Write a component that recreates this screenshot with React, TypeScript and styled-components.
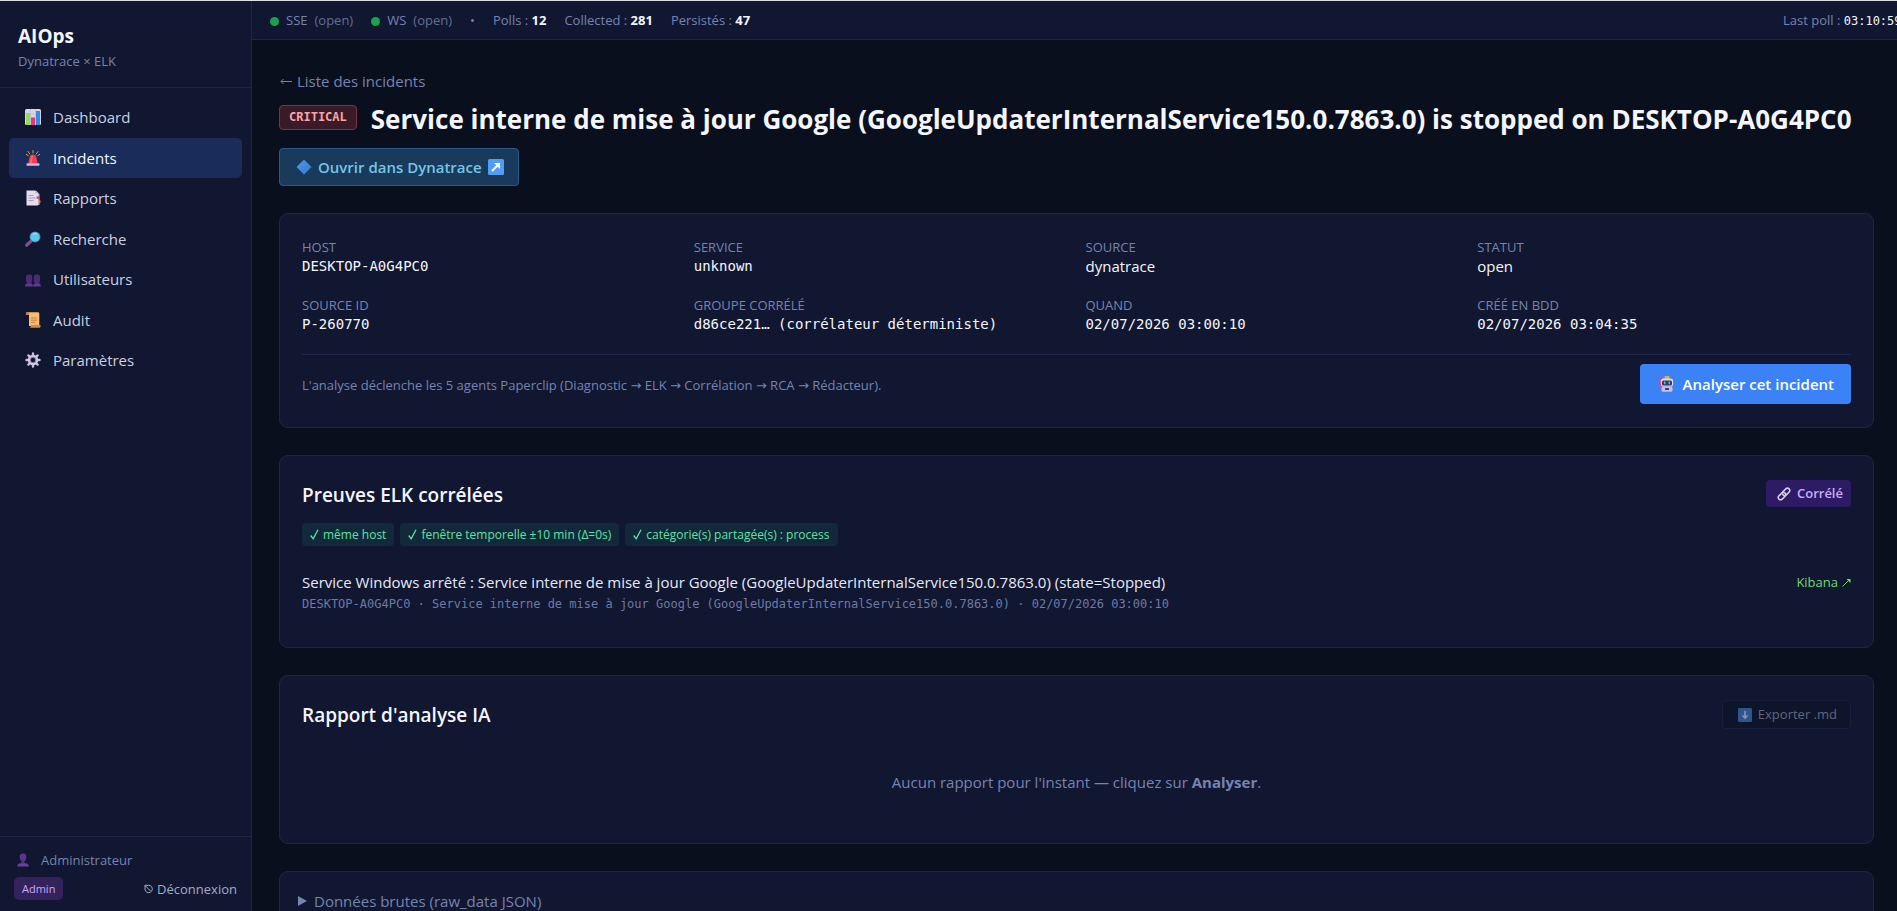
import React from 'react';
import styled, { createGlobalStyle, css } from 'styled-components';

const color = {
  page: '#0a0f1d',
  panel: '#111631',
  line: '#20264a',
  text: '#e6eaf5',
  strong: '#f4f6fc',
  soft: '#c9d0e2',
  muted: '#7684b1',
  accent: '#3b82f6',
  active: '#1a2c5a',
};
const sans = '"Open Sans", "Noto Sans", "DejaVu Sans", sans-serif';
const mono = '"DejaVu Sans Mono", monospace';

const GlobalStyle = createGlobalStyle`
  *, *::before, *::after { box-sizing: border-box; }
  body {
    margin: 0;
    background: ${color.page};
    color: ${color.text};
    font: 400 15px/1.5 ${sans};
  }
  h1, h2, p, dl, dd, ul { margin: 0; padding: 0; }
  ul { list-style: none; }
  a { color: inherit; text-decoration: none; }
  button { font: inherit; cursor: pointer; }
  svg { display: block; flex: none; }
`;

const Shell = styled.div`
  display: grid;
  grid-template-columns: 252px minmax(0, 1fr);
  height: 100vh;
  border-top: 1px solid #dcdfe6;
`;

const Sidebar = styled.aside`
  display: flex;
  flex-direction: column;
  background: ${color.panel};
  border-right: 1px solid ${color.line};
`;

const Brand = styled.div`
  padding: 22px 18px 15px;
  border-bottom: 1px solid ${color.line};
`;
const BrandName = styled.div`
  font-size: 19px;
  font-weight: 700;
  line-height: 27px;
  color: ${color.strong};
`;
const BrandSub = styled.div`
  font-size: 13px;
  line-height: 22px;
  color: ${color.muted};
`;

const Nav = styled.nav`
  flex: 1;
  padding: 9px;
`;
const NavLink = styled.a<{ $active?: boolean }>`
  display: flex;
  align-items: center;
  gap: 12px;
  padding: 9px 16px;
  border-radius: 5px;
  color: ${(p) => (p.$active ? color.strong : color.soft)};
  background: ${(p) => (p.$active ? color.active : 'transparent')};
`;

const UserPanel = styled.div`
  display: flex;
  flex-direction: column;
  gap: 7px;
  padding: 13px 14px 11px;
  border-top: 1px solid ${color.line};
  font-size: 13px;
`;
const UserName = styled.div`
  display: flex;
  align-items: center;
  gap: 11px;
  padding-left: 2px;
  line-height: 20px;
  color: ${color.muted};
`;
const UserActions = styled.div`
  display: flex;
  align-items: center;
  justify-content: space-between;
`;
const RoleBadge = styled.span`
  padding: 0 8px;
  border-radius: 5px;
  background: #33225c;
  color: #cda6fb;
  font-size: 11px;
  line-height: 23px;
`;
const Logout = styled.button`
  display: flex;
  align-items: center;
  gap: 4px;
  padding: 0;
  border: 0;
  background: none;
  color: #a3adc6;
  line-height: 20px;
`;

const Main = styled.div`
  display: flex;
  flex-direction: column;
  min-height: 0;
`;

const TopBar = styled.header`
  display: flex;
  align-items: center;
  gap: 18px;
  flex: none;
  height: 39px;
  padding: 2px 0 0 18px;
  background: ${color.panel};
  border-bottom: 1px solid ${color.line};
  color: ${color.muted};
  font-size: 13px;
  white-space: nowrap;
  overflow: hidden;
  b { color: ${color.strong}; }
`;
const Status = styled.span`
  display: flex;
  align-items: center;
  gap: 7px;
  &::before {
    content: '';
    width: 9px;
    height: 9px;
    border-radius: 50%;
    background: #18a34a;
  }
`;
const Dim = styled.span`
  color: #626f92;
`;
const LastPoll = styled.span`
  flex: 0 0 114px;
  margin-left: auto;
  overflow: hidden;
`;
const PollTime = styled.time`
  font: 400 12px ${mono};
  color: ${color.strong};
`;

const Content = styled.main`
  flex: 1;
  min-height: 0;
  overflow-y: auto;
  scrollbar-width: none;
  padding: 28px 23px 27px 27px;
`;

const BackLink = styled.a`
  display: inline-flex;
  align-items: center;
  gap: 5px;
  line-height: 22px;
  color: ${color.muted};
`;
const TitleRow = styled.div`
  display: flex;
  align-items: center;
  gap: 14px;
  margin-top: 9px;
`;
const Severity = styled.span`
  flex: none;
  margin-bottom: 4px;
  padding: 0 9px;
  border: 1px solid #84303a;
  border-radius: 4px;
  background: #391b28;
  color: #f9a5a5;
  font: 700 12px/23px ${mono};
`;
const Title = styled.h1`
  font-size: 26px;
  font-weight: 700;
  line-height: 36px;
  color: ${color.strong};
`;
const DynatraceLink = styled.a`
  display: inline-flex;
  align-items: center;
  gap: 6px;
  height: 38px;
  margin-top: 11px;
  padding: 0 14px 0 16px;
  border: 1px solid #295a8c;
  border-radius: 4px;
  background: #1a3a5c;
  color: #74c5e6;
  font-weight: 600;
`;

const Card = styled.section<{ $compact?: boolean }>`
  margin-top: 27px;
  padding: ${(p) => (p.$compact ? '18px' : '24px 22px 23px')};
  background: ${color.panel};
  border: 1px solid ${color.line};
  border-radius: 9px;
`;

const Facts = styled.dl`
  display: grid;
  grid-template-columns: repeat(4, minmax(0, 1fr));
  gap: 18px;
  padding-bottom: 18px;
  border-bottom: 1px solid ${color.line};
`;
const FactLabel = styled.dt`
  font-size: 13px;
  line-height: 18px;
  text-transform: uppercase;
  color: ${color.muted};
`;
const FactValue = styled.dd<{ $mono?: boolean }>`
  padding-bottom: 2px;
  line-height: 20px;
  color: ${color.strong};
  ${(p) => p.$mono && css`
    font-family: ${mono};
    font-size: 14px;
  `}
`;
const ActionRow = styled.div`
  display: flex;
  align-items: center;
  justify-content: space-between;
  padding-top: 9px;
`;
const Hint = styled.p`
  padding-top: 3px;
  font-size: 13px;
  color: ${color.muted};
`;
const AnalyzeButton = styled.button`
  display: flex;
  align-items: center;
  gap: 8px;
  height: 40px;
  padding: 0 17px 0 19px;
  border: 0;
  border-radius: 4px;
  background: ${color.accent};
  color: #fff;
  font-weight: 600;
`;

const CardHeader = styled.div`
  display: flex;
  align-items: flex-start;
  justify-content: space-between;
`;
const CardTitle = styled.h2`
  padding-top: 2px;
  font-size: 19px;
  font-weight: 600;
  line-height: 27px;
  color: ${color.strong};
`;
const LinkedBadge = styled.span`
  display: flex;
  align-items: center;
  gap: 6px;
  padding: 0 8px 0 11px;
  border-radius: 4px;
  background: #2e1b66;
  color: #c5affb;
  font-size: 13px;
  font-weight: 600;
  line-height: 27px;
`;
const Chips = styled.ul`
  display: flex;
  flex-wrap: wrap;
  gap: 6px;
  margin-top: 14px;
`;
const Chip = styled.li`
  display: flex;
  align-items: center;
  gap: 4px;
  padding: 0 8px;
  border-radius: 4px;
  background: #11293a;
  color: #5fe3a4;
  font-size: 12px;
  line-height: 23px;
`;
const Evidence = styled.div`
  display: flex;
  align-items: flex-start;
  justify-content: space-between;
  margin-top: 15px;
  padding: 10px 0 9px;
`;
const EvidenceTitle = styled.p`
  line-height: 22px;
  color: ${color.text};
`;
const EvidenceMeta = styled.p`
  font: 400 12px/22px ${mono};
  color: #6d7aa6;
`;
const KibanaLink = styled.a`
  display: flex;
  align-items: center;
  gap: 4px;
  font-size: 13px;
  line-height: 22px;
  color: #6fdb6f;
`;

const ExportButton = styled.button`
  display: flex;
  align-items: center;
  gap: 6px;
  height: 29px;
  padding: 0 13px 0 15px;
  border: 1px solid #181f3b;
  border-radius: 4px;
  background: #0e142a;
  color: #62667c;
  font-size: 13px;
  cursor: not-allowed;
`;
const Empty = styled.p`
  margin-top: 15px;
  padding: 27px 0;
  line-height: 22px;
  text-align: center;
  color: ${color.muted};
`;
const RawSummary = styled.summary`
  display: flex;
  align-items: center;
  gap: 7px;
  line-height: 22px;
  color: ${color.muted};
  cursor: pointer;
`;
const RawJson = styled.pre`
  margin: 12px 0 0;
  font: 400 12px/20px ${mono};
`;

const Svg = ({ size = 16, children }: { size?: number; children: React.ReactNode }) => (
  <svg width={size} height={size} viewBox="0 0 16 16" aria-hidden="true">{children}</svg>
);

const ChartIcon = () => (
  <Svg>
    <rect width="16" height="16" rx="1.5" fill="#dcd5e4" />
    <path d="M0 5h16M0 10h16M5.500 0v16M10.500 0v16" stroke="#bdb4cb" strokeWidth=".6" />
    <rect x="1" y="4" width="4" height="12" fill="#8fdc5c" />
    <rect x="6" y="8.500" width="4" height="7.500" fill="#e8356f" />
    <rect x="11" y="2" width="4" height="14" fill="#2f8de4" />
  </Svg>
);
const SirenIcon = () => (
  <Svg>
    <path d="M8 .5v2.500M3 1.500l1.800 2.500M13 1.500l-1.800 2.500M1.300 4.500l1.900 1M14.700 4.500l-1.900 1" stroke="#d9a441" strokeWidth="1" strokeLinecap="round" />
    <path d="M4.500 7.500C4.800 5.600 6 4.600 8 4.600s3.200 1 3.500 2.900l1.300 6H3.200z" fill="#f43a50" />
    <path d="M6 7c.4-1 1-1.300 2-1.300L7 13H4.800z" fill="#ff6a60" />
    <rect x="1.500" y="13.200" width="13" height="2.500" rx=".8" fill="#c9bce4" />
  </Svg>
);
const ReportIcon = () => (
  <Svg>
    <path d="M3 1h8.500l3 3v11H3z" fill="#b9adc8" />
    <path d="M1.500.5h8.800L13 3.300V15.500H1.500z" fill="#e5dced" />
    <path d="M10.300.5V3.300H13z" fill="#b9adc8" />
    <path d="M3.500 5.500h5M3.500 8h7M3.500 10.500h5" stroke="#a294b4" strokeWidth=".9" />
    <rect x="11.500" y="6.500" width="2.500" height="2.200" fill="#dc3b77" />
    <rect x="13.500" y="10.500" width="2" height="2.200" fill="#d2a136" />
  </Svg>
);
const SearchIcon = () => (
  <Svg>
    <path d="M1.800 14.200l4.400-4.400" stroke="#8a4f8d" strokeWidth="3.200" strokeLinecap="round" />
    <circle cx="10" cy="5.900" r="5.500" fill="#4e6fa8" />
    <circle cx="10" cy="5.900" r="4.700" fill="#59cbea" />
    <path d="M8 3.500c1-.9 2.500-1 3.500-.6" stroke="#b8effb" strokeWidth="1" fill="none" strokeLinecap="round" />
  </Svg>
);
const UsersIcon = () => (
  <Svg>
    <path d="M0 15.500c0-2.500 1.300-3.500 4-3.500s4 1 4 3.500zM8 15.500c0-2.500 1.300-3.500 4-3.500s4 1 4 3.500z" fill="#5f3896" />
    <rect x="1" y="3.500" width="6.200" height="8.500" rx="2.600" fill="#4b2b78" />
    <rect x="8.800" y="3.500" width="6.200" height="8.500" rx="2.600" fill="#4b2b78" />
  </Svg>
);
const ScrollIcon = () => (
  <Svg>
    <path d="M1 1.500C1 .7 1.600.2 2.500.2H13c.9 0 1.300.6 1.300 1.500V14H4V3H1z" fill="#f7bd6c" />
    <path d="M1 1.500C1 .7 1.600.2 2.400.2S4 .7 4 1.500V3H1z" fill="#c57f3e" />
    <path d="M6 13h9.500v1.200c0 .9-.6 1.600-1.500 1.600H4.500C5.500 15.500 6 14.500 6 13z" fill="#d68b4e" />
    <path d="M6 6h6M6 8.200h6M6 10.400h4" stroke="#c77c3c" strokeWidth=".9" />
  </Svg>
);
const GearIcon = () => (
  <Svg>
    <path d="M8 1.500v13M1.500 8h13M3.400 3.400l9.200 9.200M12.600 3.400L3.400 12.600" stroke="#c9bedb" strokeWidth="2.400" strokeLinecap="round" />
    <circle cx="8" cy="8" r="5.200" fill="#d5cbe3" />
    <circle cx="8" cy="8" r="3.200" fill="#9586ad" />
    <circle cx="8" cy="8" r="2.200" fill="#111631" />
  </Svg>
);
const UserIcon = () => (
  <Svg size={14}>
    <path d="M1.500 15.500c0-3 2-4.200 6.500-4.200s6.500 1.200 6.500 4.200z" fill="#6a3fa4" />
    <rect x="4.300" y=".5" width="7.400" height="8.500" rx="3.700" fill="#5b3490" />
    <rect x="6.300" y="7" width="3.400" height="5.500" fill="#553184" />
  </Svg>
);
const LogoutIcon = () => (
  <svg width="9" height="10" viewBox="0 0 9 10" fill="none" stroke="#a3adc6" aria-hidden="true">
    <path d="M3 1.600A3.700 3.700 0 1 1 1.100 3.800M1 1.500l5.500 5.500M1 3.800V1.300h2.500" />
  </svg>
);
const DiamondIcon = () => (
  <Svg>
    <defs>
      <linearGradient id="diamond" x1="0" y1="0" x2="1" y2="1">
        <stop offset="0" stopColor="#4b98ea" />
        <stop offset="1" stopColor="#3a78d2" />
      </linearGradient>
    </defs>
    <path d="M8 .5L15.500 8 8 15.500.5 8z" fill="url(#diamond)" />
  </Svg>
);
const OpenIcon = () => (
  <Svg>
    <rect width="16" height="16" rx="1.500" fill="#4f9df5" />
    <path d="M4 12l6-6" stroke="#fff" strokeWidth="2" />
    <path d="M6 4h6v6z" fill="#fff" />
  </Svg>
);
const RobotIcon = () => (
  <Svg>
    <rect x="5.500" y="0" width="5" height="3" rx="1" fill="#e9ad3a" />
    <path d="M1.500 2v9M14.500 2v9" stroke="#e23d6d" strokeWidth="1" />
    <rect x="1.800" y="2.500" width="12.400" height="8" rx="2.500" fill="#e3daed" />
    <rect x="3" y="4.500" width="10" height="5" rx="1.500" fill="#34365c" />
    <path d="M5.700 5.500v2.800M10.300 5.500v2.800" stroke="#46c2ef" strokeWidth="1.600" />
    <rect x="2.500" y="10.500" width="11" height="5.300" rx="1.500" fill="#cabedb" />
    <rect x="6" y="12" width="4" height="2" rx=".5" fill="#41415f" />
  </Svg>
);
const ChainIcon = () => (
  <svg width="14" height="14" viewBox="0 0 14 14" fill="none" stroke="#d8cce0" strokeWidth="1.500" aria-hidden="true">
    <rect x="4.800" y="2.600" width="8.500" height="4.600" rx="2.300" transform="rotate(-45 9.050 4.900)" />
    <rect x=".7" y="6.800" width="8.500" height="4.600" rx="2.300" transform="rotate(-45 4.950 9.100)" />
  </svg>
);
const DownloadIcon = () => (
  <Svg size={14}>
    <rect width="16" height="16" rx="1.500" fill="#2c558f" />
    <path d="M8 3v6" stroke="#8590ab" strokeWidth="2" />
    <path d="M4 8.500h8L8 13z" fill="#8590ab" />
  </Svg>
);
const CheckIcon = () => (
  <svg width="9" height="11" viewBox="0 0 9 11" fill="none" stroke="currentColor" strokeWidth="1.300" aria-hidden="true">
    <path d="M.7 6.500l2.500 3.300L8 .8" />
  </svg>
);
const BackArrow = () => (
  <svg width="13" height="8" viewBox="0 0 13 8" fill="none" stroke="currentColor" aria-hidden="true">
    <path d="M13 4.500H2M4.500 2L2 4.500 4.500 7" />
  </svg>
);
const NorthEast = () => (
  <svg width="9" height="9" viewBox="0 0 9 9" fill="none" stroke="currentColor" aria-hidden="true">
    <path d="M.5 8.500L7 2" />
    <path d="M4.500 1h4v4z" fill="currentColor" stroke="none" />
  </svg>
);
const Triangle = () => (
  <svg width="9" height="10" viewBox="0 0 9 10" fill="currentColor" aria-hidden="true">
    <path d="M0 0l9 5-9 5z" />
  </svg>
);

const navItems = [
  { label: 'Dashboard', Icon: ChartIcon },
  { label: 'Incidents', Icon: SirenIcon, active: true },
  { label: 'Rapports', Icon: ReportIcon },
  { label: 'Recherche', Icon: SearchIcon },
  { label: 'Utilisateurs', Icon: UsersIcon },
  { label: 'Audit', Icon: ScrollIcon },
  { label: 'Paramètres', Icon: GearIcon },
];

const facts = [
  { label: 'Host', value: 'DESKTOP-A0G4PC0', mono: true },
  { label: 'Service', value: 'unknown', mono: true },
  { label: 'Source', value: 'dynatrace' },
  { label: 'Statut', value: 'open' },
  { label: 'Source ID', value: 'P-260770', mono: true },
  { label: 'Groupe corrélé', value: 'd86ce221… (corrélateur déterministe)', mono: true },
  { label: 'Quand', value: '02/07/2026 03:00:10', mono: true },
  { label: 'Créé en BDD', value: '02/07/2026 03:04:35', mono: true },
];

const reasons = ['même host', 'fenêtre temporelle ±10 min (Δ=0s)', 'catégorie(s) partagée(s) : process'];

export default function App() {
  return (
    <>
      <GlobalStyle />
      <Shell>
        <Sidebar>
          <Brand>
            <BrandName>AIOps</BrandName>
            <BrandSub>Dynatrace × ELK</BrandSub>
          </Brand>
          <Nav>
            {navItems.map(({ label, Icon, active }) => (
              <NavLink key={label} href="#" $active={active} aria-current={active ? 'page' : undefined}>
                <Icon />
                {label}
              </NavLink>
            ))}
          </Nav>
          <UserPanel>
            <UserName><UserIcon />Administrateur</UserName>
            <UserActions>
              <RoleBadge>Admin</RoleBadge>
              <Logout type="button"><LogoutIcon />Déconnexion</Logout>
            </UserActions>
          </UserPanel>
        </Sidebar>

        <Main>
          <TopBar>
            <Status>SSE <Dim>(open)</Dim></Status>
            <Status>WS <Dim>(open)</Dim></Status>
            <span>•</span>
            <span>Polls : <b>12</b></span>
            <span>Collected : <b>281</b></span>
            <span>Persistés : <b>47</b></span>
            <LastPoll>Last poll : <PollTime>03:10:59</PollTime></LastPoll>
          </TopBar>

          <Content>
            <BackLink href="#"><BackArrow />Liste des incidents</BackLink>
            <TitleRow>
              <Severity>CRITICAL</Severity>
              <Title>Service interne de mise à jour Google (GoogleUpdaterInternalService150.0.7863.0) is stopped on DESKTOP-A0G4PC0</Title>
            </TitleRow>
            <DynatraceLink href="#"><DiamondIcon />Ouvrir dans Dynatrace<OpenIcon /></DynatraceLink>

            <Card>
              <Facts>
                {facts.map((f) => (
                  <div key={f.label}>
                    <FactLabel>{f.label}</FactLabel>
                    <FactValue $mono={f.mono}>{f.value}</FactValue>
                  </div>
                ))}
              </Facts>
              <ActionRow>
                <Hint>L'analyse déclenche les 5 agents Paperclip (Diagnostic → ELK → Corrélation → RCA → Rédacteur).</Hint>
                <AnalyzeButton type="button"><RobotIcon />Analyser cet incident</AnalyzeButton>
              </ActionRow>
            </Card>

            <Card>
              <CardHeader>
                <CardTitle>Preuves ELK corrélées</CardTitle>
                <LinkedBadge><ChainIcon />Corrélé</LinkedBadge>
              </CardHeader>
              <Chips>
                {reasons.map((r) => (
                  <Chip key={r}><CheckIcon />{r}</Chip>
                ))}
              </Chips>
              <Evidence>
                <div>
                  <EvidenceTitle>Service Windows arrêté : Service interne de mise à jour Google (GoogleUpdaterInternalService150.0.7863.0) (state=Stopped)</EvidenceTitle>
                  <EvidenceMeta>DESKTOP-A0G4PC0 · Service interne de mise à jour Google (GoogleUpdaterInternalService150.0.7863.0) · 02/07/2026 03:00:10</EvidenceMeta>
                </div>
                <KibanaLink href="#">Kibana<NorthEast /></KibanaLink>
              </Evidence>
            </Card>

            <Card>
              <CardHeader>
                <CardTitle>Rapport d'analyse IA</CardTitle>
                <ExportButton type="button" disabled><DownloadIcon />Exporter .md</ExportButton>
              </CardHeader>
              <Empty>Aucun rapport pour l'instant — cliquez sur <b>Analyser</b>.</Empty>
            </Card>

            <Card $compact>
              <details>
                <RawSummary><Triangle />Données brutes (raw_data JSON)</RawSummary>
                <RawJson>{'{}'}</RawJson>
              </details>
            </Card>
          </Content>
        </Main>
      </Shell>
    </>
  );
}
